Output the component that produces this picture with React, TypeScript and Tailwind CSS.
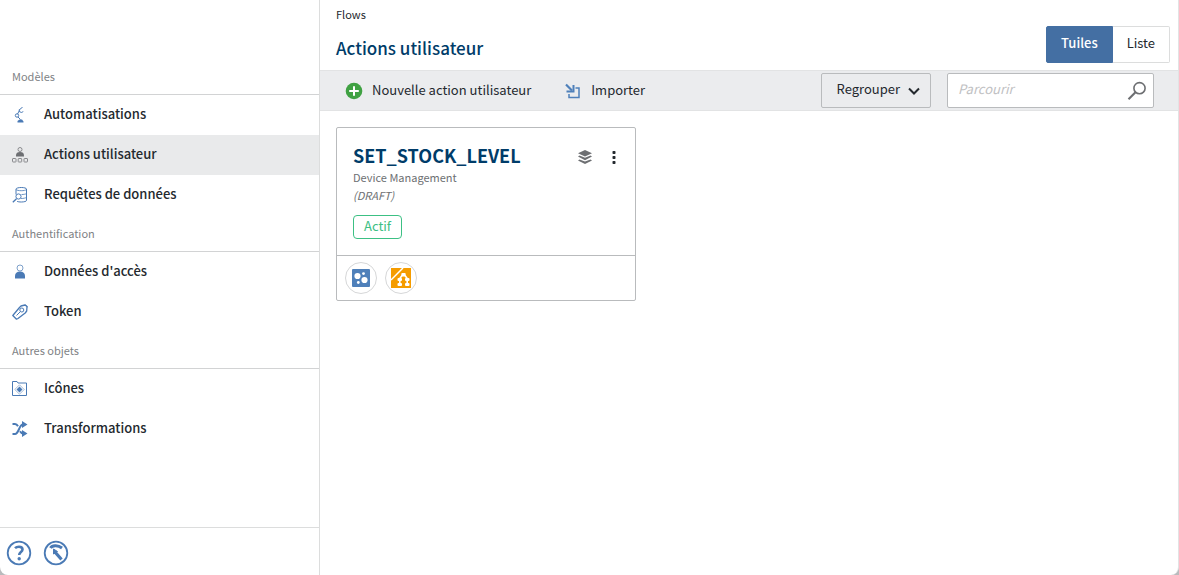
import React, { useState } from 'react';

interface NavItem {
    label: string;
    icon: React.ReactNode;
}

interface NavSection {
    title: string;
    items: NavItem[];
}

const RobotArmIcon = () => (
    <svg width="16" height="16" viewBox="0 0 16 16" fill="none" stroke="#4a7ab5" strokeWidth="1">
        <path d="M5.500 7 7.500 3.500M6 10l2.500 2.500" />
        <circle cx="5" cy="8.500" r="1.700" />
        <path d="M10.500.5C9.500.5 9 1 8.800 1.800L7.200 2.700v1.800l1.800.8c1 .4 1.800 0 2-1" />
        <path d="M5.500 15.500V14l2-1.500H10l1.500 2v1z" fill="#4a7ab5" stroke="none" />
    </svg>
);

const UserActionsIcon = () => (
    <svg width="16" height="16" viewBox="0 0 16 16" fill="none" stroke="#8a8b8e">
        <circle cx="8" cy="2.500" r="2" />
        <path d="M4 9.500V8.500C4 6 5.500 5 8 5s4 1 4 3.500v1z" fill="#6d6f72" stroke="none" />
        <rect x="0.500" y="11.500" width="3.500" height="3.500" rx="0.500" />
        <rect x="6.200" y="11.500" width="3.500" height="3.500" rx="0.500" />
        <rect x="12" y="11.500" width="3.500" height="3.500" rx="0.500" />
    </svg>
);

const DataQueryIcon = () => (
    <svg width="16" height="16" viewBox="0 0 16 16" fill="none" stroke="#4a7ab5">
        <path d="M4 7.500V2c0-.8 2.500-1.500 5.300-1.500S14.500 1.200 14.500 2v11.500c0 .8-2.400 1.500-5.200 1.500-1.800 0-3.400-.2-4.300-.7" />
        <path d="M4 2.500c.8.8 2.800 1.200 5.200 1.200s4.500-.4 5.300-1.200M9.500 7.500c2.300 0 4.200-.3 5-1M9 11.500c2.400 0 4.600-.4 5.500-1.200" strokeOpacity="0.800" />
        <circle cx="6.500" cy="9.500" r="2.600" fill="#fff" />
        <path d="M4.500 11.700.8 15.200" strokeWidth="1.300" />
    </svg>
);

const PersonIcon = () => (
    <svg width="16" height="16" viewBox="0 0 16 16" fill="none" stroke="#4a7ab5">
        <circle cx="8" cy="4" r="3" strokeOpacity="0.700" />
        <path d="M3 14.500V12C3 9 5 7.500 8 7.500s5 1.500 5 4.500v2.500z" fill="#4a7ab5" stroke="none" />
    </svg>
);

const TokenIcon = () => (
    <svg width="16" height="16" viewBox="0 0 16 16" fill="none" stroke="#4a7ab5">
        <path d="M.8 11.500 7.500 3.500 9 2l4-1 2 1.500-.3 4.500-1.500 2L6 14.500l-1.500.7z" strokeWidth="1.300" strokeLinejoin="round" />
        <circle cx="9.800" cy="6" r="2" />
        <path d="M8.500 7.500 4.500 11.500M13 .7l2.700 2.300" />
    </svg>
);

const IconsIcon = () => (
    <svg width="16" height="16" viewBox="0 0 16 16" fill="none" stroke="#4a7ab5">
        <path d="M.5 14.500V.5H5l1 1.500h8.500v12.500z" />
        <path d="m7.500 3.800 4.700 4.700-4.700 4.700-4.700-4.700z" strokeOpacity="0.500" />
        <path d="m7.500 5.500 3 3-3 3-3-3z" fill="#4a7ab5" stroke="none" />
    </svg>
);

const ShuffleIcon = () => (
    <svg width="16" height="16" viewBox="0 0 16 16" fill="none" stroke="#4a7ab5" strokeWidth="2">
        <path d="M.5 3H3c1.500 0 2.300 1 3 2.300M8 10.200c.8 1.300 1.500 2.300 3 2.300h.5M.5 13H3c4 0 4-9.500 8-9.500h.5" />
        <path d="M10 0l5.500 3.500L10 7zM10 9l5.500 3.500L10 16z" fill="#4a7ab5" stroke="none" />
    </svg>
);

const HelpIcon = () => (
    <svg width="26" height="26" viewBox="0 0 26 26" fill="none" stroke="#4a7ab5">
        <circle cx="13" cy="13" r="11.300" strokeWidth="1.800" />
        <path d="M9 8.200c1-1 2.500-1.500 4-1.500 2.200 0 3.500 1.100 3.500 2.800 0 2.500-3.300 2.700-3.300 5.500" strokeWidth="2.600" />
        <circle cx="13.200" cy="18.700" r="1.700" fill="#4a7ab5" stroke="none" />
    </svg>
);

const ToolsIcon = () => (
    <svg width="26" height="26" viewBox="0 0 26 26" fill="none" stroke="#4a7ab5">
        <circle cx="13" cy="13" r="11.300" strokeWidth="1.800" />
        <path d="M7.500 8C9 5.500 14.500 4.500 19 8" strokeWidth="3" />
        <path d="M10.500 9v5l4-2.500z" fill="#4a7ab5" strokeWidth="1" />
        <path d="m12 12 6.500 7.500" strokeWidth="3.200" />
    </svg>
);

const AddIcon = () => (
    <svg width="18" height="18" viewBox="0 0 18 18">
        <circle cx="9" cy="9" r="8.300" fill="#3fa142" />
        <path d="M9 4.200v9.600M4.200 9h9.600" stroke="#fff" strokeWidth="2" />
    </svg>
);

const ImportIcon = () => (
    <svg width="16" height="16" viewBox="0 0 16 16" fill="none" stroke="#4f80ba">
        <path d="m1 1.500 6 6" strokeWidth="2.200" />
        <path d="M8.500 2v6.500H1.500" strokeWidth="2" />
        <path d="M10.500 5h3.500v9.500H4V11" strokeWidth="1.500" />
    </svg>
);

const SearchIcon = () => (
    <svg width="20" height="20" viewBox="0 0 20 20" fill="none" stroke="#6d6f72">
        <circle cx="12.500" cy="7.200" r="5.600" strokeWidth="1.600" />
        <path d="m8.500 11.300-7 7" strokeWidth="2.200" />
    </svg>
);

const ChevronIcon = () => (
    <svg width="12" height="8" viewBox="0 0 12 8" fill="none" stroke="#24292e" strokeWidth="2">
        <path d="m1 1.500 5 5 5-5" />
    </svg>
);

const LayersIcon = () => (
    <svg width="16" height="16" viewBox="0 0 16 16" fill="#6d6f72">
        <path d="M8 1 15 4.200 8 7.400 1 4.200z" />
        <path d="m2.500 6.600 5.500 2.200 5.500-2.200L15 7.600 8 11.200 1 7.600z" />
        <path d="M2.500 10.400 8 12.600l5.500-2.200 1.500 1L8 15l-7-3.600z" />
    </svg>
);

const DotsIcon = () => (
    <svg width="6" height="16" viewBox="0 0 6 16" fill="#24292e">
        <rect x="1.500" y="2" width="3" height="3" rx="0.800" />
        <rect x="1.500" y="7" width="3" height="3" rx="0.800" />
        <rect x="1.500" y="12" width="3" height="3" rx="0.800" />
    </svg>
);

const BubblesIcon = () => (
    <svg width="18" height="18" viewBox="0 0 18 18" fill="#fff">
        <rect width="18" height="18" rx="1" fill="#4f80ba" />
        <circle cx="5.500" cy="7" r="3.100" />
        <circle cx="12.500" cy="11" r="3.100" />
        <circle cx="11.500" cy="4.600" r="1.400" />
        <circle cx="6.300" cy="13.500" r="1.400" />
    </svg>
);

const HierarchyIcon = () => (
    <svg width="20" height="20" viewBox="0 0 20 20" fill="#fff">
        <path d="M0 0h20v20H0z" fill="#f59c00" />
        <path d="M0 12 12 0" stroke="#fff" strokeWidth="1.500" />
        <rect x="10.300" y="5" width="4.400" height="3.500" rx="1" />
        <rect x="6.500" y="10" width="4.500" height="3" rx="1" />
        <rect x="14" y="10" width="4.500" height="3" rx="1" />
        <rect x="6.500" y="15" width="4.500" height="3" rx="1" />
        <rect x="14" y="15" width="4.500" height="3" rx="1" />
        <path d="M11 7.500 8.800 10.500V16M14 7.500l2.200 3V16" fill="none" stroke="#fff" strokeWidth="1.600" />
    </svg>
);

const sections: NavSection[] = [
    {
        title: 'Modèles',
        items: [
            { label: 'Automatisations', icon: <RobotArmIcon /> },
            { label: 'Actions utilisateur', icon: <UserActionsIcon /> },
            { label: 'Requêtes de données', icon: <DataQueryIcon /> }
        ]
    },
    {
        title: 'Authentification',
        items: [
            { label: "Données d'accès", icon: <PersonIcon /> },
            { label: 'Token', icon: <TokenIcon /> }
        ]
    },
    {
        title: 'Autres objets',
        items: [
            { label: 'Icônes', icon: <IconsIcon /> },
            { label: 'Transformations', icon: <ShuffleIcon /> }
        ]
    }
];

const Sidebar: React.FC = () => {
    const [active, setActive] = useState('Actions utilisateur');

    return (
        <aside className="flex w-80 shrink-0 flex-col border-r border-[#dcdddd]">
            <nav className="flex-1 pt-[58px]">
                {sections.map((section) => (
                    <section key={section.title}>
                        <h2 className="border-b border-[#d2d3d4] px-3 py-2 text-[11px] leading-5 text-[#808285]">
                            {section.title}
                        </h2>
                        <ul>
                            {section.items.map((item) => (
                                <li key={item.label}>
                                    <a
                                        href="#"
                                        onClick={() => setActive(item.label)}
                                        className={`flex h-10 items-center gap-4 px-3 text-[13px] leading-5 font-medium text-[#24292e] ${
                                            active === item.label ? 'bg-[#e9eaeb]' : 'hover:bg-gray-50'
                                        }`}
                                    >
                                        {item.icon}
                                        <span className="pb-0.5">{item.label}</span>
                                    </a>
                                </li>
                            ))}
                        </ul>
                    </section>
                ))}
            </nav>
            <div className="flex h-12 items-center gap-[11px] border-t border-[#dcdddd] px-1.5 pt-1 pb-0.5">
                <button type="button" aria-label="Aide"><HelpIcon /></button>
                <button type="button" aria-label="Outils"><ToolsIcon /></button>
            </div>
        </aside>
    );
};

const Toolbar: React.FC = () => {
    const [query, setQuery] = useState('');

    return (
        <div className="flex items-center border-y border-[#e2e3e4] bg-[#ebecee] py-0.5 pr-6 pl-[25px] text-[13px] leading-5">
            <button type="button" className="flex items-center gap-[9px]">
                <AddIcon />
                <span className="pb-0.5">Nouvelle action utilisateur</span>
            </button>
            <button type="button" className="ml-[34px] flex items-center gap-2.5">
                <ImportIcon />
                <span className="pb-0.5">Importer</span>
            </button>
            <button
                type="button"
                className="ml-auto flex h-[35px] items-center gap-2 rounded-xs border border-[#b9bbbd] pr-2.5 pl-[15px]"
            >
                <span className="pb-1">Regrouper</span>
                <ChevronIcon />
            </button>
            <div className="ml-4 flex h-[35px] w-[207px] items-center rounded-xs border border-[#b9bbbd] bg-white pr-1.5 pl-2.5">
                <input
                    type="search"
                    aria-label="Parcourir"
                    placeholder="Parcourir"
                    value={query}
                    onChange={(e) => setQuery(e.target.value)}
                    className="min-w-0 flex-1 pb-1 outline-none placeholder:text-[#bfc1c3] placeholder:italic"
                />
                <SearchIcon />
            </div>
        </div>
    );
};

const FlowCard: React.FC = () => (
    <article className="w-[300px] rounded-xs border border-[#b9bbbd]">
        <div className="px-4 pt-3.5 pb-4">
            <div className="flex items-center pr-0.5">
                <h2 className="flex-1 text-lg leading-[26px] font-bold text-[#003c69]">SET_STOCK_LEVEL</h2>
                <button type="button" aria-label="Versions" className="pt-1"><LayersIcon /></button>
                <button type="button" aria-label="Menu" className="ml-[18px] pt-1"><DotsIcon /></button>
            </div>
            <p className="text-[11px] leading-[18px] text-[#6d6f72]">Device Management</p>
            <p className="text-[11px] leading-[18px] text-[#6d6f72] italic">(DRAFT)</p>
            <span className="mt-[11px] flex h-6 w-fit items-center rounded-sm border border-[#3cc084] px-2.5 pb-0.5 text-[13px] leading-5 text-[#3cc084]">
                Actif
            </span>
        </div>
        <div className="flex gap-2 border-t border-[#b9bbbd] px-2 py-1.5">
            <span className="flex size-8 items-center justify-center rounded-full border border-[#d6d7d8]">
                <BubblesIcon />
            </span>
            <span className="flex size-8 items-center justify-center rounded-full border border-[#d6d7d8]">
                <HierarchyIcon />
            </span>
        </div>
    </article>
);

const App: React.FC = () => {
    const [view, setView] = useState('tiles');

    return (
        <div className="bg-[#b9bbbd] font-['Noto_Sans_CJK_SC','Noto_Sans',sans-serif] text-[#24292e]">
            <div className="flex min-h-screen rounded-b-lg border-r border-[#e2e3e4] bg-white">
                <Sidebar />
                <main className="min-w-0 flex-1">
                    <header className="flex h-[70px] items-end justify-between pr-2 pl-4">
                        <div>
                            <p className="text-[11px] leading-4">Flows</p>
                            <h1 className="mt-3 mb-2 text-[17px] leading-7 font-medium text-[#003c69]">
                                Actions utilisateur
                            </h1>
                        </div>
                        <div className="mb-[7px] flex h-[37px] text-[13px] leading-5">
                            <button
                                type="button"
                                onClick={() => setView('tiles')}
                                className={`rounded-l-xs border px-3.5 pb-1 ${
                                    view === 'tiles'
                                        ? 'border-[#446fa3] bg-[#446fa3] font-medium text-white'
                                        : 'border-[#dcdddd] bg-white'
                                }`}
                            >
                                Tuiles
                            </button>
                            <button
                                type="button"
                                onClick={() => setView('list')}
                                className={`rounded-r-xs border border-l-0 px-3.5 pb-1 ${
                                    view === 'list'
                                        ? 'border-[#446fa3] bg-[#446fa3] font-medium text-white'
                                        : 'border-[#dcdddd] bg-white'
                                }`}
                            >
                                Liste
                            </button>
                        </div>
                    </header>
                    <Toolbar />
                    <div className="p-4">
                        <FlowCard />
                    </div>
                </main>
            </div>
        </div>
    );
};

export default App;
